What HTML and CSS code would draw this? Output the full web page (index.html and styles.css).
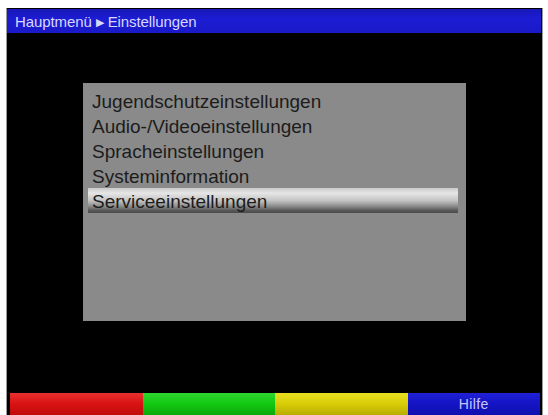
FILE: index.html
```html
<!DOCTYPE html>
<html lang="de">
<head>
<meta charset="utf-8">
<link rel="stylesheet" href="styles.css">
</head>
<body>
<div class="screen">
  <div class="header">Hauptmenü <span class="arrow">&#9654;</span> Einstellungen</div>
  <div class="panel">
    <div class="item">Jugendschutzeinstellungen</div>
    <div class="item">Audio-/Videoeinstellungen</div>
    <div class="item">Spracheinstellungen</div>
    <div class="item">Systeminformation</div>
    <div class="item selected">Serviceeinstellungen</div>
  </div>
  <div class="footer">
    <div class="key red"></div>
    <div class="key green"></div>
    <div class="key yellow"></div>
    <div class="key blue">Hilfe</div>
  </div>
</div>
</body>
</html>
```
FILE: styles.css
```css
html, body {
  margin: 0;
  padding: 0;
  background: #ffffff;
}
body {
  width: 548px;
  height: 415px;
  overflow: hidden;
}
.screen {
  margin: 8px 0 0 6px;
  width: 537px;
  height: 407px;
  background: #000;
  border-right: 1px solid #9a9a9a;
  border-left: 1px solid #9a9a9a;
  box-sizing: border-box;
  display: flex;
  flex-direction: column;
  padding-top: 1px;
}
.header {
  height: 24px;
  box-sizing: border-box;
  margin-right: 1px;
  background: linear-gradient(#1818b8, #1c1cd4 40%, #1a1ac8);
  color: #d8d8ff;
  font-family: "Liberation Sans", Arial, sans-serif;
  font-size: 15px;
  line-height: 22px;
  padding: 2px 0 0 8px;
  letter-spacing: -0.1px;
}
.arrow {
  font-size: 11px;
  vertical-align: 1px;
}
.panel {
  margin: 50px 0 0 76px;
  width: 383px;
  height: 238px;
  background: #8a8a8a;
  box-sizing: border-box;
  padding: 5px 8px 0 5px;
  font-family: "Liberation Sans", Arial, sans-serif;
  font-size: 19px;
  color: #1c1c1c;
}
.item {
  height: 25px;
  box-sizing: border-box;
  padding: 3px 0 0 4px;
  line-height: 22px;
  letter-spacing: 0;
}
.selected {
  background: linear-gradient(#c8c8c8, #e6e6e6 20%, #c4c4c4 50%, #8e8e8e 72%, #585858 90%, #4a4a4a);
}
.footer {
  margin-top: auto;
  display: flex;
  height: 22px;
  padding: 0 2px 0 3px;
}
.key {
  flex: 1;
  font-family: "Liberation Sans", Arial, sans-serif;
  font-size: 14px;
  line-height: 22px;
  letter-spacing: 0.4px;
  color: #c8c8ff;
  text-align: center;
}
.red { background: linear-gradient(#e83030, #d81212 50%, #c00c0c); }
.green { background: linear-gradient(#30d830, #12c812 50%, #0aa80a); }
.yellow { background: linear-gradient(#e8e020, #d8cc08 50%, #b8ac00); }
.blue { background: linear-gradient(#2020d8, #1414c4 50%, #1010b0); }
```
